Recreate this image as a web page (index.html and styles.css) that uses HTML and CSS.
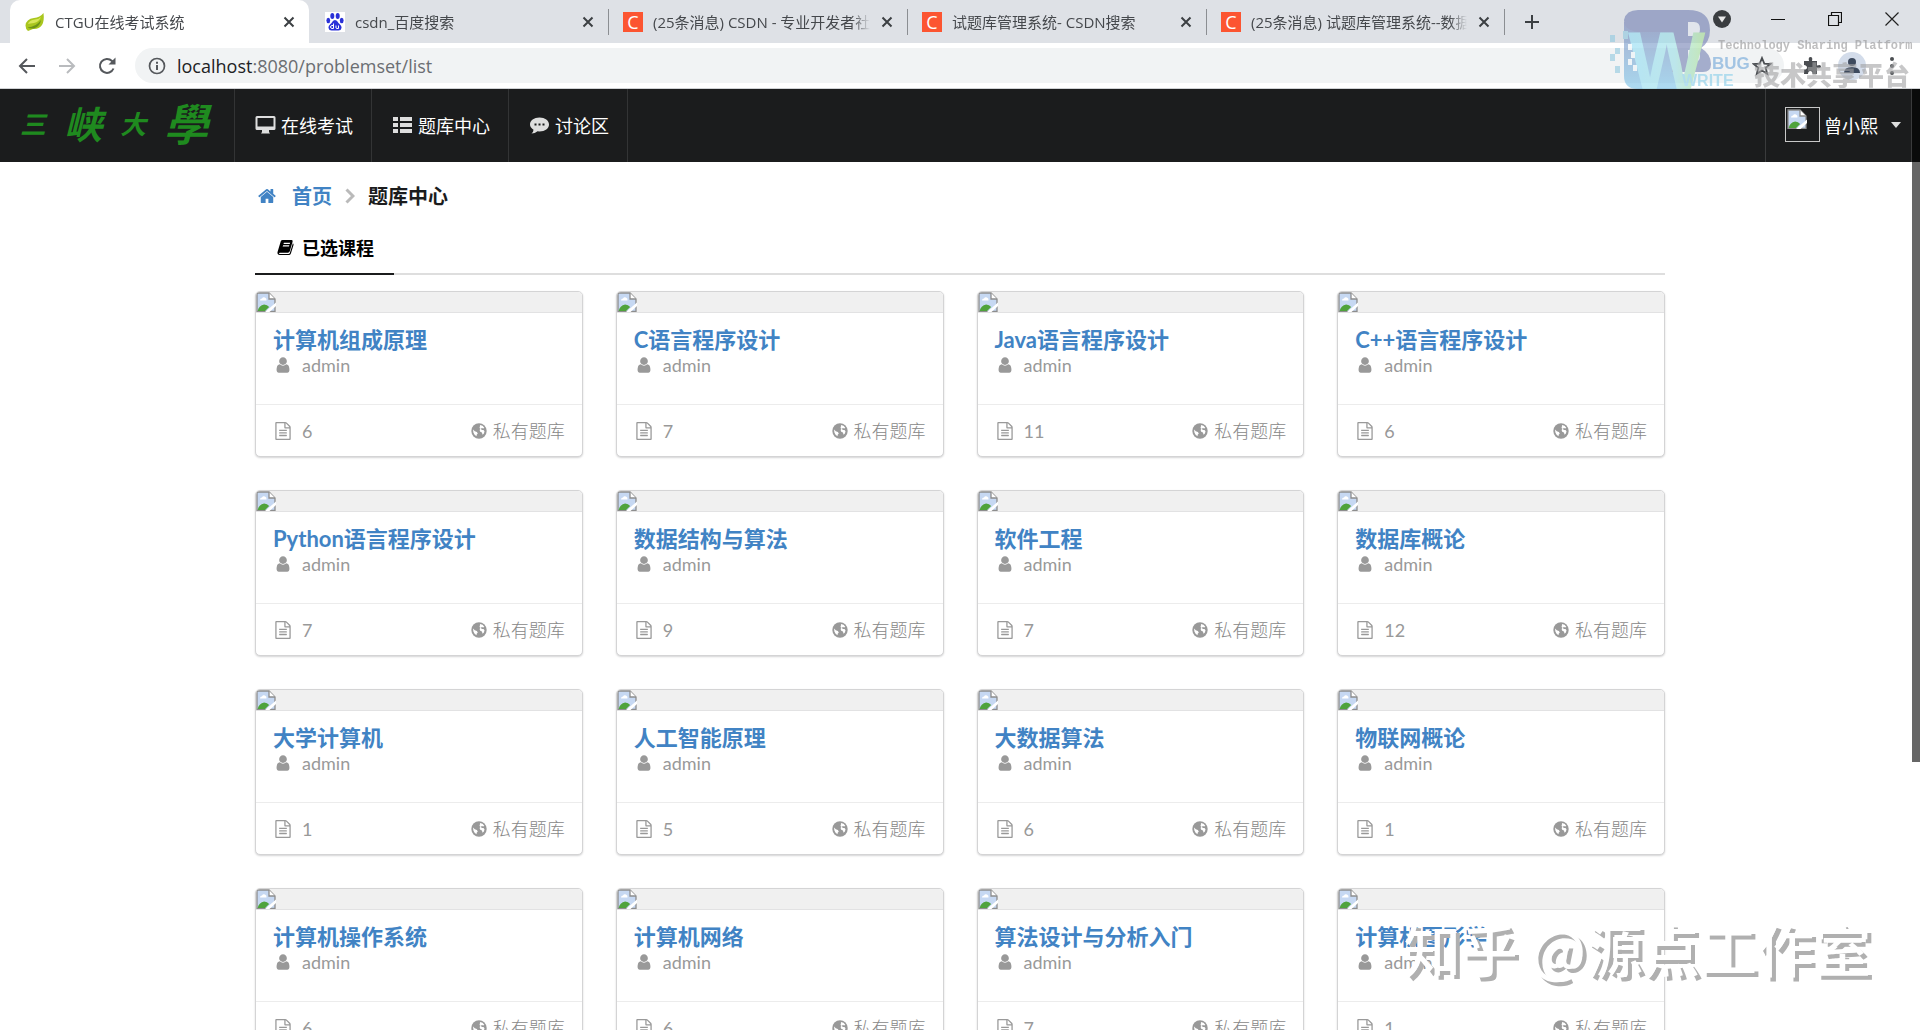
FILE: index.html
```html
<!DOCTYPE html>
<html lang="zh-CN">
<head>
<meta charset="utf-8">
<title>CTGU在线考试系统</title>
<link rel="stylesheet" href="styles.css">
</head>
<body>
<svg class="defs" aria-hidden="true">
  <symbol id="i-broken" viewBox="0 0 20 20"><path d="M1 1h12l6 6v12.500H1z" fill="#c6d8f2" stroke="#8d8d8d" stroke-width="1.300"/><path d="M13 1v6h6" fill="#fff" stroke="#8d8d8d" stroke-width="1.300"/><path d="M4 8.500q0-2 2-2 1-2 3-1t1.500 3z" fill="#fff"/><path d="M1.700 19q1-5.500 6.500-6.500 3 0 5 2.500L9 19z" fill="#4fa33c"/><path d="M9 20L20 10.500V14L13.500 20z" fill="#fff"/></symbol>
  <symbol id="i-user" viewBox="0 0 1792 1792"><path d="M1536 1399q0 109-62.500 187t-150.500 78h-854q-88 0-150.500-78t-62.500-187q0-85 8.500-160.500t31.500-152 58.500-131 94-89 134.500-34.500q131 128 313 128t313-128q76 0 134.500 34.500t94 89 58.500 131 31.500 152 8.500 160.500zm-256-887q0 159-112.500 271.500t-271.500 112.500-271.500-112.500-112.500-271.500 112.500-271.500 271.500-112.500 271.500 112.500 112.500 271.500z"/></symbol>
  <symbol id="i-file" viewBox="0 0 1792 1792"><path d="M1596 380q28 28 48 76t20 88v1152q0 40-28 68t-68 28h-1344q-40 0-68-28t-28-68v-1600q0-40 28-68t68-28h896q40 0 88 20t76 48zm-444-244v376h376q-10-29-22-41l-313-313q-12-12-41-22zm384 1528v-1024h-416q-40 0-68-28t-28-68v-416h-768v1536h1280zm-1024-864q0-14 9-23t23-9h704q14 0 23 9t9 23v64q0 14-9 23t-23 9h-704q-14 0-23-9t-9-23v-64zm736 224q14 0 23 9t9 23v64q0 14-9 23t-23 9h-704q-14 0-23-9t-9-23v-64q0-14 9-23t23-9h704zm0 256q14 0 23 9t9 23v64q0 14-9 23t-23 9h-704q-14 0-23-9t-9-23v-64q0-14 9-23t23-9h704z"/></symbol>
  <symbol id="i-globe" viewBox="0 0 16 16"><circle cx="8" cy="8" r="7.700"/><path d="M9 2l2.500.8 1.800 2-1 .6-1.500-.3-1 1 1.200 1 1.500-.2 1 1.300-.6 2.300-1.300 1.300-.7-2.300-1.700-.8-.6-1.700.9-1.300-1-.6.400-1.500zM2 6.500l1.800 1.800 2 .8 1 1.300-1.100 1.300-.2 1.500-1.900-1.400-1.200-2.300z" fill="#fff"/></symbol>
  <symbol id="i-x" viewBox="0 0 12 12"><path d="M1.500 1.500l9 9M10.500 1.500l-9 9" fill="none" stroke="#3c4043" stroke-width="2"/></symbol>
</svg>

<div class="browser">
  <header class="tabstrip">
    <div class="tab active">
      <svg class="favicon" viewBox="0 0 20 20"><path d="M18.500 1q1 8-1.500 12-3 4.500-9 4l-5 2q-2.500-2-2.500-5.500Q1 7 9 6q6-.5 9.500-5z" fill="#a9c61e"/><path d="M2.500 15.500Q11 15 16 8q-1 6-6 8-4 1.300-7.500-.5z" fill="#6d9418"/><path d="M3 12q1-4 7-4.500 4-.5 6-2.500-2 5-7 6-4 .5-6 1z" fill="#d8e65a"/></svg>
      <span class="tab-title">CTGU在线考试系统</span>
      <button class="tab-close" aria-label="关闭标签页"><svg><use href="#i-x"/></svg></button>
    </div>
    <div class="tab">
      <svg class="favicon" viewBox="0 0 20 20"><rect width="20" height="20" fill="#fff"/><g fill="#2a31d8"><ellipse cx="7.300" cy="4" rx="2" ry="3"/><ellipse cx="12.700" cy="4" rx="2" ry="3"/><ellipse cx="3.300" cy="8.500" rx="1.900" ry="2.700"/><ellipse cx="16.700" cy="8.500" rx="1.900" ry="2.700"/><path d="M10 8q2 0 3.500 3 3.500 3 3 5-.5 3-4 2.500h-5q-3.500.5-4-2.500-.5-2 3-5Q8 8 10 8z"/></g><path d="M8.500 11.500v5H7q-1.500-.2-1.500-1.500T7 13.500h1.500M11 13.500V16q.2.500 1 .500h1.500v-3" fill="none" stroke="#fff"/></svg>
      <span class="tab-title">csdn_百度搜索</span>
      <button class="tab-close" aria-label="关闭标签页"><svg><use href="#i-x"/></svg></button>
    </div>
    <div class="tab split">
      <span class="favicon csdn">C</span>
      <span class="tab-title">(25条消息) CSDN - 专业开发者社区</span>
      <button class="tab-close" aria-label="关闭标签页"><svg><use href="#i-x"/></svg></button>
    </div>
    <div class="tab split">
      <span class="favicon csdn">C</span>
      <span class="tab-title">试题库管理系统- CSDN搜索</span>
      <button class="tab-close" aria-label="关闭标签页"><svg><use href="#i-x"/></svg></button>
    </div>
    <div class="tab split last">
      <span class="favicon csdn">C</span>
      <span class="tab-title">(25条消息) 试题库管理系统--数据库</span>
      <button class="tab-close" aria-label="关闭标签页"><svg><use href="#i-x"/></svg></button>
    </div>
    <button class="new-tab" aria-label="新标签页"><svg viewBox="0 0 16 16"><path d="M8 1v14M1 8h14" stroke="#3c4043" stroke-width="2"/></svg></button>
    <div class="window-controls">
      <button aria-label="搜索标签页"><svg viewBox="0 0 18 18"><circle cx="9" cy="9" r="9" fill="#3a3d40"/><path d="M5 6.500h8L9 12.500z" fill="#e8e8e8"/></svg></button>
      <button aria-label="最小化"><svg viewBox="0 0 14 14"><path d="M0 7.500h14" stroke="#111"/></svg></button>
      <button aria-label="还原"><svg viewBox="0 0 14 14"><path d="M.5 3.500h10v10H.500zM3.500 3V.500h10v10H11" fill="none" stroke="#111" stroke-width="1.200"/></svg></button>
      <button aria-label="关闭"><svg viewBox="0 0 14 14"><path d="M.5.500l13 13M13.500.500l-13 13" stroke="#222" stroke-width="1.200"/></svg></button>
    </div>
  </header>

  <div class="toolbar">
    <button class="tool" aria-label="后退"><svg viewBox="0 0 18 18"><path d="M17 9H2M9 2L2 9l7 7" fill="none" stroke="#55585c" stroke-width="2"/></svg></button>
    <button class="tool" aria-label="前进"><svg viewBox="0 0 18 18"><path d="M1 9h15M9 2l7 7-7 7" fill="none" stroke="#b9bbbe" stroke-width="2"/></svg></button>
    <button class="tool" aria-label="重新加载"><svg viewBox="0 0 18 18"><path d="M15.500 11.500A7 7 0 1 1 14 4l2 2" fill="none" stroke="#55585c" stroke-width="2"/><path d="M17.500.500v7h-7z" fill="#55585c"/></svg></button>
    <div class="address">
      <svg class="info" viewBox="0 0 18 18"><circle cx="9" cy="9" r="7.500" fill="none" stroke="#55585c" stroke-width="1.700"/><path d="M9 8v5M9 4.700v2" stroke="#55585c" stroke-width="2"/></svg>
      <span class="url"><b>localhost</b>:8080/problemset/list</span>
      <button class="star" aria-label="收藏"><svg viewBox="0 0 20 20"><path d="M10 2l2.300 5.600 6 .4-4.600 3.900 1.500 5.900L10 14.600l-5.200 3.200 1.500-5.900L1.700 8l6-.4z" fill="none" stroke="#4a4d51" stroke-width="1.800"/></svg></button>
    </div>
    <div class="tool-right">
      <button aria-label="扩展程序"><svg viewBox="0 0 20 20"><path d="M2 5h5q-1-4 1.500-4T10 5h5v4.500q4-1.500 4 1T15 12v6h-4.500q0-3-2.200-3T6 18H2v-4.500q3 0 3-2T2 9z" fill="#4a4d51"/></svg></button>
      <button aria-label="账户"><svg class="avatar" viewBox="0 0 28 28"><circle cx="14" cy="14" r="14" fill="#d3dcea"/><circle cx="14" cy="10" r="4" fill="#3d4a5e"/><path d="M6 21q0-6 8-6t8 6z" fill="#3d4a5e"/></svg></button>
      <button aria-label="菜单"><svg viewBox="0 0 20 20" fill="#4a4d51"><circle cx="10" cy="3" r="2"/><circle cx="10" cy="10" r="2"/><circle cx="10" cy="17" r="2"/></svg></button>
    </div>
  </div>

  <div class="site-brand" aria-hidden="true">
    <svg class="wb" viewBox="0 0 104 80">
      <defs>
        <linearGradient id="g1" x1="0" x2="1"><stop offset="0" stop-color="#8fdcf5"/><stop offset=".6" stop-color="#9adfe6"/><stop offset="1" stop-color="#a8e08c"/></linearGradient>
        <linearGradient id="g2" x1="0" x2="0" y1="0" y2="1"><stop offset="0" stop-color="#7583b8"/><stop offset="1" stop-color="#78c4ea"/></linearGradient>
      </defs>
      <path d="M14 12h54v67H28q-14 0-14-13z" fill="url(#g2)"/>
      <path d="M28 0h50q22 0 22 20 0 12-9 18 10 6 10 16 0 8-8 8H62V22H28Q14 20 14 10 16 0 28 0z" fill="#7280b3"/>
      <path d="M78 12h6q6 0 6 7t-6 7h-6zM78 40h6q6 0 6 6t-6 6h-6z" fill="#e4e8f0"/>
      <text x="18" y="79" class="wb-w" fill="url(#g1)">W</text>
      <path d="M0 25h5v7H0zM13 21h5v8h-5zM5 38h5v6H5zM0 44h5v7H0zM5 56h5v7H5z" fill="#8fc9e0"/>
      <path d="M18 34h4v6h-4zM21 42h4v6h-4zM18 49h4v6h-4zM23 55h4v6h-4z" fill="#eef6fa"/>
    </svg>
    <span class="brand-bug">BUG</span>
    <span class="brand-write">WRITE</span>
    <span class="brand-en">Technology Sharing Platform</span>
    <span class="brand-cn">技术共享平台</span>
  </div>

  <div class="page">
    <nav class="navbar">
      <a class="logo" href="#"><span class="l-a">三</span><span class="l-b">峡</span><span class="l-c">大</span><span class="l-d">學</span></a>
      <a class="nav-item" href="#"><svg viewBox="0 0 21 20"><path d="M2 1h17q1.500 0 1.500 1.500v11q0 1.500-1.500 1.500h-5v2l1 1.500H6L7 17v-2H2Q.5 15 .5 13.500v-11Q.5 1 2 1zm.5 2v8.500h16V3z" fill-rule="evenodd"/></svg>在线考试</a>
      <a class="nav-item" href="#"><svg viewBox="0 0 21 20"><path d="M1 2h5v4H1zM8 2h12v4H8zM1 8h5v4H1zM8 8h12v4H8zM1 14h5v4H1zM8 14h12v4H8z"/></svg>题库中心</a>
      <a class="nav-item" href="#"><svg viewBox="0 0 21 20"><path d="M10.500 2.500c5.500 0 9.500 3 9.500 7s-4 7-9.500 7l-2-.2Q6 18.500 2.500 18.500 4.500 17 4.500 14.700 1 12.500 1 9.500c0-4 4-7 9.500-7z"/><path d="M5.500 8.500h2v2h-2zM9.500 8.500h2v2h-2zM13.500 8.500h2v2h-2z" fill="#1b1c1d"/></svg>讨论区</a>
      <a class="account" href="#"><span class="photo"><svg><use href="#i-broken"/></svg></span>曾小熙<svg class="caret" viewBox="0 0 10 6"><path d="M0 0h10L5 6z"/></svg></a>
    </nav>

    <main class="container">
      <div class="breadcrumb">
        <svg class="home" viewBox="0 0 1664 1792"><path d="M1408 992v480q0 26-19 45t-45 19h-384v-384h-256v384h-384q-26 0-45-19t-19-45v-480q0-1 .500-3t.500-3l575-474 575 474q1 2 1 6zm223-69l-62 74q-8 9-21 11h-3q-13 0-21-7l-692-577-692 577q-12 8-24 7-13-2-21-11l-62-74q-8-10-7-23.500t11-21.500l719-599q32-26 76-26t76 26l244 204v-195q0-14 9-23t23-9h192q14 0 23 9t9 23v408l219 182q10 8 11 21.500t-7 23.500z"/></svg>
        <a href="#">首页</a>
        <svg class="chevron" viewBox="0 0 10 16"><path d="M1.500 1.500L8 8l-6.500 6.500" fill="none" stroke="#bababa" stroke-width="3"/></svg>
        <span>题库中心</span>
      </div>
      <div class="menu">
        <a class="menu-item" href="#"><svg viewBox="0 0 18 18"><path d="M6 1h9.500q1.500.2 1 1.800L13.500 13q-.5 1.500-2 1.500H3q-1 .3-.8.900.2.600 1.200.600h8.800q1 0 1.400-1.200L16.800 4.500q1 .5.700 1.800l-2.800 9q-.6 1.700-2.200 1.700H3Q.3 16.800.5 14L4 2.500Q4.500 1 6 1zm1.300 3l-.4 1.200h6.600l.4-1.200zM6.500 6.700L6 8h6.600l.5-1.300z" fill-rule="evenodd"/></svg>已选课程</a>
      </div>
      <div class="cards">
        <article class="card"><div class="image"><svg><use href="#i-broken"/></svg></div><div class="content"><a class="title" href="#">计算机组成原理</a><div class="meta"><svg><use href="#i-user"/></svg>admin</div></div><div class="extra"><span class="meta"><svg><use href="#i-file"/></svg>6</span><span class="scope"><svg><use href="#i-globe"/></svg>私有题库</span></div></article>
        <article class="card"><div class="image"><svg><use href="#i-broken"/></svg></div><div class="content"><a class="title" href="#">C语言程序设计</a><div class="meta"><svg><use href="#i-user"/></svg>admin</div></div><div class="extra"><span class="meta"><svg><use href="#i-file"/></svg>7</span><span class="scope"><svg><use href="#i-globe"/></svg>私有题库</span></div></article>
        <article class="card"><div class="image"><svg><use href="#i-broken"/></svg></div><div class="content"><a class="title" href="#">Java语言程序设计</a><div class="meta"><svg><use href="#i-user"/></svg>admin</div></div><div class="extra"><span class="meta"><svg><use href="#i-file"/></svg>11</span><span class="scope"><svg><use href="#i-globe"/></svg>私有题库</span></div></article>
        <article class="card"><div class="image"><svg><use href="#i-broken"/></svg></div><div class="content"><a class="title" href="#">C++语言程序设计</a><div class="meta"><svg><use href="#i-user"/></svg>admin</div></div><div class="extra"><span class="meta"><svg><use href="#i-file"/></svg>6</span><span class="scope"><svg><use href="#i-globe"/></svg>私有题库</span></div></article>
        <article class="card"><div class="image"><svg><use href="#i-broken"/></svg></div><div class="content"><a class="title" href="#">Python语言程序设计</a><div class="meta"><svg><use href="#i-user"/></svg>admin</div></div><div class="extra"><span class="meta"><svg><use href="#i-file"/></svg>7</span><span class="scope"><svg><use href="#i-globe"/></svg>私有题库</span></div></article>
        <article class="card"><div class="image"><svg><use href="#i-broken"/></svg></div><div class="content"><a class="title" href="#">数据结构与算法</a><div class="meta"><svg><use href="#i-user"/></svg>admin</div></div><div class="extra"><span class="meta"><svg><use href="#i-file"/></svg>9</span><span class="scope"><svg><use href="#i-globe"/></svg>私有题库</span></div></article>
        <article class="card"><div class="image"><svg><use href="#i-broken"/></svg></div><div class="content"><a class="title" href="#">软件工程</a><div class="meta"><svg><use href="#i-user"/></svg>admin</div></div><div class="extra"><span class="meta"><svg><use href="#i-file"/></svg>7</span><span class="scope"><svg><use href="#i-globe"/></svg>私有题库</span></div></article>
        <article class="card"><div class="image"><svg><use href="#i-broken"/></svg></div><div class="content"><a class="title" href="#">数据库概论</a><div class="meta"><svg><use href="#i-user"/></svg>admin</div></div><div class="extra"><span class="meta"><svg><use href="#i-file"/></svg>12</span><span class="scope"><svg><use href="#i-globe"/></svg>私有题库</span></div></article>
        <article class="card"><div class="image"><svg><use href="#i-broken"/></svg></div><div class="content"><a class="title" href="#">大学计算机</a><div class="meta"><svg><use href="#i-user"/></svg>admin</div></div><div class="extra"><span class="meta"><svg><use href="#i-file"/></svg>1</span><span class="scope"><svg><use href="#i-globe"/></svg>私有题库</span></div></article>
        <article class="card"><div class="image"><svg><use href="#i-broken"/></svg></div><div class="content"><a class="title" href="#">人工智能原理</a><div class="meta"><svg><use href="#i-user"/></svg>admin</div></div><div class="extra"><span class="meta"><svg><use href="#i-file"/></svg>5</span><span class="scope"><svg><use href="#i-globe"/></svg>私有题库</span></div></article>
        <article class="card"><div class="image"><svg><use href="#i-broken"/></svg></div><div class="content"><a class="title" href="#">大数据算法</a><div class="meta"><svg><use href="#i-user"/></svg>admin</div></div><div class="extra"><span class="meta"><svg><use href="#i-file"/></svg>6</span><span class="scope"><svg><use href="#i-globe"/></svg>私有题库</span></div></article>
        <article class="card"><div class="image"><svg><use href="#i-broken"/></svg></div><div class="content"><a class="title" href="#">物联网概论</a><div class="meta"><svg><use href="#i-user"/></svg>admin</div></div><div class="extra"><span class="meta"><svg><use href="#i-file"/></svg>1</span><span class="scope"><svg><use href="#i-globe"/></svg>私有题库</span></div></article>
        <article class="card"><div class="image"><svg><use href="#i-broken"/></svg></div><div class="content"><a class="title" href="#">计算机操作系统</a><div class="meta"><svg><use href="#i-user"/></svg>admin</div></div><div class="extra"><span class="meta"><svg><use href="#i-file"/></svg>6</span><span class="scope"><svg><use href="#i-globe"/></svg>私有题库</span></div></article>
        <article class="card"><div class="image"><svg><use href="#i-broken"/></svg></div><div class="content"><a class="title" href="#">计算机网络</a><div class="meta"><svg><use href="#i-user"/></svg>admin</div></div><div class="extra"><span class="meta"><svg><use href="#i-file"/></svg>6</span><span class="scope"><svg><use href="#i-globe"/></svg>私有题库</span></div></article>
        <article class="card"><div class="image"><svg><use href="#i-broken"/></svg></div><div class="content"><a class="title" href="#">算法设计与分析入门</a><div class="meta"><svg><use href="#i-user"/></svg>admin</div></div><div class="extra"><span class="meta"><svg><use href="#i-file"/></svg>7</span><span class="scope"><svg><use href="#i-globe"/></svg>私有题库</span></div></article>
        <article class="card"><div class="image"><svg><use href="#i-broken"/></svg></div><div class="content"><a class="title" href="#">计算机图形学</a><div class="meta"><svg><use href="#i-user"/></svg>admin</div></div><div class="extra"><span class="meta"><svg><use href="#i-file"/></svg>1</span><span class="scope"><svg><use href="#i-globe"/></svg>私有题库</span></div></article>
      </div>
    </main>
    <div class="scroll-thumb"></div>
    <div class="credit">知乎 @源点工作室</div>
  </div>
</div>
</body>
</html>
```
FILE: styles.css
```css
* { box-sizing: border-box; }
body {
  margin: 0;
  font-family: Lato, "Noto Sans CJK SC", sans-serif;
  font-size: 18px;
  color: #1b1c1d;
  background: #fff;
}
a { color: inherit; text-decoration: none; }
button { border: 0; padding: 0; background: none; display: flex; align-items: center; justify-content: center; }
svg { display: block; flex: none; }
.defs { position: absolute; width: 0; height: 0; }

.browser { position: relative; display: flex; flex-direction: column; height: 100vh; overflow: hidden; }

/* tab strip */
.tabstrip {
  display: flex;
  flex: none;
  height: 43px;
  padding-left: 10px;
  background: #dee1e6;
  font-family: "Open Sans", "Noto Sans CJK SC", sans-serif;
  font-size: 15px;
  color: #45484c;
}
.tab { position: relative; display: flex; align-items: center; flex: 0 1 299px; min-width: 0; padding: 0 11px 0 16px; }
.tab.active { background: #fff; border-radius: 10px 10px 0 0; padding-left: 15px; }
.tab.split { border-image: linear-gradient(#0000 10px, #8b8e92 10px, #8b8e92 34px, #0000 34px) 1; border-left: 1px solid; padding-left: 14px; }
.tab.last { border-right: 1px solid; }
.favicon { width: 20px; height: 20px; flex: none; margin-right: 10px; }
.csdn { background: #fc5531; color: #fff; font-size: 18px; line-height: 20px; text-align: center; }
.tab-title { flex: 1; min-width: 0; overflow: hidden; white-space: nowrap; line-height: 24px; -webkit-mask-image: linear-gradient(90deg, #000 92%, #0000); mask-image: linear-gradient(90deg, #000 92%, #0000); }
.tab-close { width: 18px; height: 18px; margin-left: 8px; }
.tab-close svg { width: 12px; height: 12px; }
.new-tab { width: 54px; }
.new-tab svg { width: 16px; height: 16px; }
.window-controls { display: flex; margin-left: auto; height: 38px; }
.window-controls button { width: 57px; }
.window-controls svg { width: 14px; height: 14px; }
.window-controls button:first-child { width: 54px; }
.window-controls button:first-child svg { width: 18px; height: 18px; }

/* address row */
.toolbar {
  display: flex;
  align-items: center;
  flex: none;
  height: 46px;
  padding: 0 8px 0 7px;
  background: #fff;
  border-bottom: 1px solid #d0d2d5;
}
.tool { width: 40px; height: 36px; }
.tool svg { width: 18px; height: 18px; }
.address { display: flex; align-items: center; flex: 1; height: 35px; margin-left: 8px; padding: 0 12px 0 13px; border-radius: 18px; background: #f1f3f4; }
.info { width: 18px; height: 18px; margin-right: 11px; }
.url { flex: 1; font-family: "Open Sans", sans-serif; font-size: 18px; line-height: 24px; color: #6b6e72; }
.url b { font-weight: 400; color: #202124; }
.star svg { width: 20px; height: 20px; }
.tool-right { display: flex; margin-left: 8px; }
.tool-right button { width: 40px; height: 36px; }
.tool-right svg { width: 20px; height: 20px; }
.tool-right .avatar { width: 28px; height: 28px; }

/* translucent brand mark laid over the window corner */
.site-brand { position: absolute; top: 0; right: 0; width: 312px; height: 89px; overflow: hidden; pointer-events: none; font-weight: 700; line-height: 1; opacity: .6; }
.site-brand > * { position: absolute; white-space: nowrap; }
.wb { left: 2px; top: 10px; width: 104px; height: 80px; }
.wb-w { font: 700 82px "Liberation Sans Narrow", "Liberation Sans", sans-serif; }
.brand-bug { left: 104px; top: 55px; font: 700 17px/18px "Liberation Sans", sans-serif; color: #6fa5d8; }
.brand-write { left: 74px; top: 73px; font: 700 16px/16px "Liberation Sans", sans-serif; color: #86cdea; }
.brand-en { left: 110px; top: 39px; font: 700 12px/14px "Liberation Mono", monospace; color: #949496; }
.brand-cn { left: 146px; top: 59px; font: 900 26px/30px "Noto Sans CJK SC", sans-serif; color: #a2a2a4; }

/* page */
.page { position: relative; flex: 1; min-height: 0; overflow: hidden; }
.navbar { display: flex; height: 73px; padding-right: 8px; background: #1b1c1d; color: #fff; }
.logo { display: flex; align-items: center; width: 235px; padding: 0 20px 4px; gap: 18px; border-right: 1px solid #333435; color: #1f8a1f; font-weight: 700; font-style: italic; line-height: 1; }
.l-a { font-size: 26px; }
.l-b { font-size: 38px; }
.l-c { font-size: 26px; }
.l-d { font-size: 44px; }
.nav-item { display: flex; align-items: center; padding: 0 18px 2px 20px; border-right: 1px solid #333435; }
.nav-item svg { width: 21px; height: 20px; margin-right: 5px; fill: #dedede; }
.account { display: flex; align-items: center; margin-left: auto; padding: 0 10px 2px 19px; border: solid #3a3b3c; border-width: 0 1px; }
.photo { width: 35px; height: 35px; margin-right: 4px; padding: 1px; border: 1px solid #c8c8c8; }
.photo svg { width: 20px; height: 20px; }
.caret { width: 10px; height: 6px; margin-left: 13px; fill: #dedede; }

.container { width: calc(100% - 510px); margin: 0 auto; }
.breadcrumb { display: flex; align-items: center; padding-top: 20px; font-size: 20px; line-height: 28px; font-weight: 700; }
.breadcrumb a, .title { color: #4183c4; }
.home { width: 18px; height: 20px; margin: 0 16px 0 3px; fill: #4183c4; }
.chevron { width: 10px; height: 16px; margin: 0 13px; }
.menu { display: flex; height: 65px; border-bottom: 2px solid #dedede; }
.menu-item { display: flex; align-items: center; padding: 12px 20px 0 22px; margin-bottom: -2px; border-bottom: 2px solid #1b1c1d; font-weight: 700; line-height: 24px; color: #000; }
.menu-item svg { width: 17px; height: 17px; margin-right: 8px; }

.cards { display: grid; grid-template-columns: repeat(4, 1fr); gap: 33px; margin-top: 16px; }
.card { display: flex; flex-direction: column; height: 166px; border: 1px solid #d4d4d5; border-radius: 5px; overflow: hidden; box-shadow: 0 1px 2px #d4d4d5; background: #fff; }
.image { height: 21px; background: #f0f0f0; border-bottom: 1px solid #e2e2e3; }
.image svg { width: 20px; height: 20px; }
.content { flex: 1; padding: 12px 17px 0; }
.title { display: block; font-size: 22px; line-height: 29px; font-weight: 700; }
.meta, .scope { display: flex; align-items: center; color: #999; fill: #999; line-height: 22px; }
.scope { font-weight: 300; color: #888; }
.meta svg { width: 18px; height: 18px; margin: 0 10px 0 1px; }
.extra { display: flex; align-items: center; justify-content: space-between; height: 52px; padding: 0 17px; border-top: 1px solid #ececec; }
.scope svg { width: 16px; height: 16px; margin-right: 6px; }

.scroll-thumb { position: absolute; top: 0; right: 0; width: 8px; height: 673px; max-height: 100%; background: #0009; }
.credit { position: absolute; right: 49px; bottom: 43px; font: 500 57px/80px "Noto Sans CJK SC", sans-serif; color: #fff; text-shadow: 4px 4px 0 #b0b0b0; white-space: nowrap; }
```
